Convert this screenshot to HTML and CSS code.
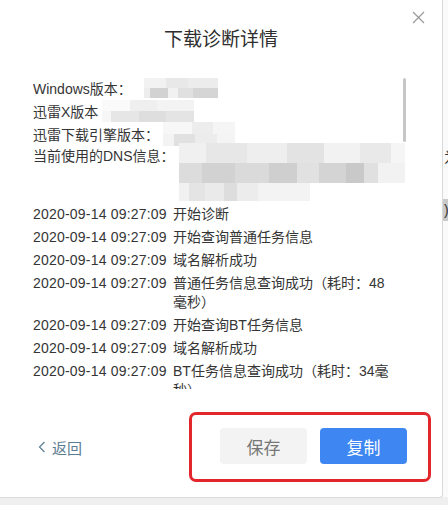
FILE: index.html
```html
<!DOCTYPE html>
<html lang="zh-CN">
<head>
    <meta charset="UTF-8">
    <meta name="viewport" content="width=device-width, initial-scale=1.0">
    <title>下载诊断详情</title>
    <link rel="stylesheet" href="styles.css">
</head>
<body>
    <div class="page">
        <div class="dialog">
            <button class="close" title="关闭">
                <svg width="13" height="13" viewBox="0 0 13 13"><path d="M1 1 L12 12 M12 1 L1 12" stroke="#9a9a9a" stroke-width="1.2" fill="none"/></svg>
            </button>
            <h1 class="title">下载诊断详情</h1>

            <div class="scroll">
                <div class="info">
                    <div class="info-row"><span class="label">Windows版本：</span><span class="blur b-win"></span></div>
                    <div class="info-row"><span class="label">迅雷X版本</span><span class="blur b-xl"></span></div>
                    <div class="info-row"><span class="label">迅雷下载引擎版本：</span><span class="blur b-engine"></span></div>
                    <div class="info-row dns"><span class="label">当前使用的DNS信息：</span><span class="blur b-dns"></span></div>
                </div>
                <ul class="log">
                    <li><span class="time">2020-09-14 09:27:09</span><span class="msg">开始诊断</span></li>
                    <li><span class="time">2020-09-14 09:27:09</span><span class="msg">开始查询普通任务信息</span></li>
                    <li><span class="time">2020-09-14 09:27:09</span><span class="msg">域名解析成功</span></li>
                    <li><span class="time">2020-09-14 09:27:09</span><span class="msg">普通任务信息查询成功（耗时：48毫秒）</span></li>
                    <li><span class="time">2020-09-14 09:27:09</span><span class="msg">开始查询BT任务信息</span></li>
                    <li><span class="time">2020-09-14 09:27:09</span><span class="msg">域名解析成功</span></li>
                    <li><span class="time">2020-09-14 09:27:09</span><span class="msg">BT任务信息查询成功（耗时：34毫秒）</span></li>
                </ul>
                <div class="scrollbar"></div>
            </div>

            <div class="footer">
                <a class="back" href="#">
                    <svg width="8" height="12" viewBox="0 0 8 12"><path d="M6.5 1 L1.5 6 L6.5 11" stroke="#5b7d92" stroke-width="1.2" fill="none"/></svg>
                    返回
                </a>
                <div class="actions">
                    <button class="btn btn-save">保存</button>
                    <button class="btn btn-copy">复制</button>
                </div>
            </div>
        </div>
        <div class="edge">
            <span class="edge-a">为</span>
            <span class="edge-b">)</span>
        </div>
    </div>
</body>
</html>
```

FILE: styles.css
```css
body {
    margin: 0;
    background-color: #efefef;
    font-family: "Liberation Sans", "Noto Sans CJK SC", sans-serif;
    color: #353535;
}

.page {
    display: flex;
    align-items: flex-start;
}

.dialog {
    position: relative;
    width: 442px;
    height: 497px;
    background-color: #ffffff;
    border-right: 1px solid #dadada;
    border-bottom: 1px solid #dadada;
    border-radius: 0 0 4px 0;
    display: flex;
    flex-direction: column;
}

.close {
    position: absolute;
    top: 11px;
    right: 17px;
    padding: 0;
    border: none;
    background: none;
    width: 13px;
    height: 13px;
    cursor: pointer;
}

.title {
    margin: 0;
    padding-top: 27px;
    font-size: 19px;
    line-height: 26px;
    font-weight: normal;
    text-align: center;
    color: #2e2e2e;
}

.scroll {
    position: relative;
    margin: 23px 0 0 33px;
    width: 377px;
    height: 313px;
    overflow: hidden;
    font-size: 14px;
}

.scrollbar {
    position: absolute;
    top: 2px;
    left: 370px;
    width: 3px;
    height: 64px;
    border-radius: 2px;
    background-color: #c6c6c6;
}

.info-row {
    display: flex;
    align-items: center;
    height: 23px;
}

.info-row.dns {
    align-items: flex-start;
    height: 57px;
    line-height: 23px;
}

.label {
    flex-shrink: 0;
    white-space: nowrap;
}

.blur {
    display: inline-block;
    flex-shrink: 0;
    background-repeat: no-repeat;
}

.b-win {
    margin-left: 12px;
    width: 74px;
    height: 20px;
    background:
        linear-gradient(90deg, #ededed 0 8%, #d2d2d2 8% 32%, #f1f1f1 32% 46%, #e0e0e0 46% 66%, #d5d5d5 66% 100%) 0 10px / 100% 10px no-repeat,
        linear-gradient(90deg, #f2f2f2 0 30%, #e8e8e8 30% 60%, #ececec 60% 100%) 0 0 / 100% 10px no-repeat;
}

.b-xl {
    margin-left: 4px;
    width: 92px;
    height: 22px;
    background:
        linear-gradient(90deg, #f6f6f6 0 10%, #e6e6e6 10% 40%, #dedede 40% 70%, #e4e4e4 70% 100%) 0 11px / 100% 11px no-repeat,
        linear-gradient(90deg, #fafafa 0 30%, #efefef 30% 60%, #f3f3f3 60% 100%) 0 0 / 100% 11px no-repeat;
}

.b-engine {
    margin-left: 4px;
    width: 72px;
    height: 24px;
    background:
        linear-gradient(90deg, #f3f3f3 0 15%, #e1e1e1 15% 45%, #ececec 45% 75%, #f4f4f4 75% 100%) 0 12px / 100% 12px no-repeat,
        linear-gradient(90deg, #f7f7f7 0 40%, #ededed 40% 70%, #f5f5f5 70% 100%) 0 0 / 100% 12px no-repeat;
}

.b-dns {
    margin: -2px 0 0 4px;
    width: 226px;
    height: 58px;
    background:
        linear-gradient(90deg, #f1f1f1 0 8%, #e4e4e4 8% 20%, #eaeaea 20% 34%, #dddddd 34% 44%, #ececec 44% 60%, #f3f3f3 60% 100%) 0 40px / 58% 18px no-repeat,
        linear-gradient(90deg, #dcdcdc 0 10%, #d2d2d2 10% 25%, #dadada 25% 40%, #cfcfcf 40% 52%, #e1e1e1 52% 62%, #d4d4d4 62% 74%, #c9c9c9 74% 82%, #e0e0e0 82% 88%, #f2f2f2 88% 100%) 0 20px / 100% 20px no-repeat,
        linear-gradient(90deg, #f0f0f0 0 12%, #e7e7e7 12% 30%, #eeeeee 30% 48%, #e3e3e3 48% 64%, #f2f2f2 64% 80%, #e9e9e9 80% 94%, #f5f5f5 94% 100%) 0 0 / 100% 20px no-repeat;
}

.log {
    list-style: none;
    margin: 3px 0 0;
    padding: 0;
    width: 361px;
}

.log li {
    display: flex;
    line-height: 19px;
    margin-bottom: 4px;
}

.time {
    flex: 0 0 140px;
    white-space: nowrap;
    letter-spacing: 0.2px;
}

.msg {
    flex: 1;
}

.footer {
    display: flex;
    justify-content: space-between;
    align-items: center;
    padding: 23px 11px 0 38px;
}

.back {
    display: flex;
    align-items: center;
    gap: 6px;
    font-size: 15px;
    color: #5b7d92;
    text-decoration: none;
}

.actions {
    display: flex;
    gap: 13px;
    padding: 13px 21px 15px 28px;
    border: 3px solid #e2262b;
    border-radius: 7px;
}

.btn {
    width: 87px;
    height: 36px;
    border: none;
    border-radius: 4px;
    font-family: "Noto Sans CJK SC", sans-serif;
    font-size: 17px;
    cursor: pointer;
}

.btn-save {
    background-color: #f3f3f3;
    color: #777777;
}

.btn-copy {
    background-color: #3e87f3;
    color: #ffffff;
}

.edge {
    width: 5px;
    height: 497px;
    overflow: hidden;
    background-color: #fafafa;
    font-size: 14px;
    display: flex;
    flex-direction: column;
}

.edge-a {
    margin-top: 146px;
    margin-left: 1px;
    color: #333333;
}

.edge-b {
    margin-top: 33px;
    padding: 3px 0 3px 1px;
    background-color: #c9c9c9;
    color: #333333;
}
```
